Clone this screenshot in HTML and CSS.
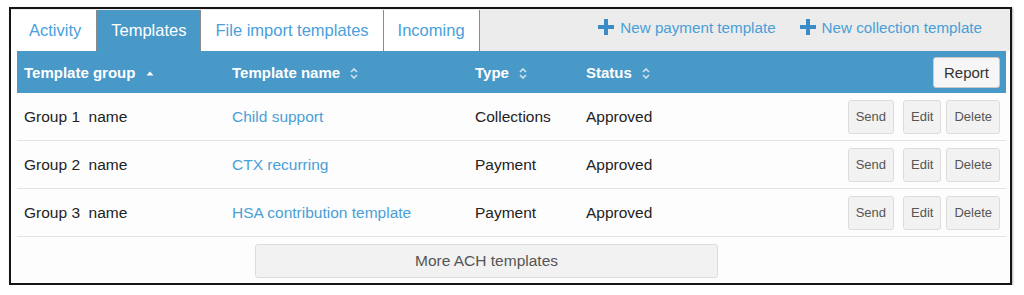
FILE: index.html
```html
<!DOCTYPE html>
<html lang="en">
<head>
  <meta charset="UTF-8" />
  <title>ACH Templates</title>
  <meta name="viewport" content="width=device-width, initial-scale=1" />
  <link rel="stylesheet" href="styles.css">
</head>
<body>

  <div class="frame">

    <!-- Tabs and actions -->
    <div class="tabbar">
      <a class="tab" href="#">Activity</a>
      <a class="tab active" href="#">Templates</a>
      <a class="tab" href="#">File import templates</a>
      <a class="tab" href="#">Incoming</a>

      <div class="actions">
        <a href="#" class="new-link">
          <svg class="plus" width="16" height="16" viewBox="0 0 16 16"><path d="M8 0v16M0 8h16" stroke="currentColor" stroke-width="4"/></svg>
          New payment template
        </a>
        <a href="#" class="new-link">
          <svg class="plus" width="16" height="16" viewBox="0 0 16 16"><path d="M8 0v16M0 8h16" stroke="currentColor" stroke-width="4"/></svg>
          New collection template
        </a>
      </div>
    </div>

    <div class="panel">
      <table class="templates">
        <colgroup>
          <col style="width: 208px">
          <col style="width: 243px">
          <col style="width: 111px">
          <col>
          <col style="width: 190px">
        </colgroup>
        <thead>
          <tr>
            <th>Template group
              <svg class="sort" width="8" height="10" viewBox="0 0 8 10"><path d="M0.5 6.5L4 2.5L7.5 6.5Z" fill="#fff"/></svg>
            </th>
            <th>Template name
              <svg class="sort dim" width="8" height="11" viewBox="0 0 8 11"><path d="M1 4L4 1L7 4M1 7L4 10L7 7" fill="none" stroke="#fff" stroke-width="1.6"/></svg>
            </th>
            <th>Type
              <svg class="sort dim" width="8" height="11" viewBox="0 0 8 11"><path d="M1 4L4 1L7 4M1 7L4 10L7 7" fill="none" stroke="#fff" stroke-width="1.6"/></svg>
            </th>
            <th>Status
              <svg class="sort dim" width="8" height="11" viewBox="0 0 8 11"><path d="M1 4L4 1L7 4M1 7L4 10L7 7" fill="none" stroke="#fff" stroke-width="1.6"/></svg>
            </th>
            <th class="right"><button class="btn report">Report</button></th>
          </tr>
        </thead>
        <tbody>
          <tr>
            <td>Group 1&nbsp; name</td>
            <td><a href="#">Child support</a></td>
            <td>Collections</td>
            <td>Approved</td>
            <td class="right"><button class="btn small send">Send</button><button class="btn small">Edit</button><button class="btn small">Delete</button></td>
          </tr>
          <tr>
            <td>Group 2&nbsp; name</td>
            <td><a href="#">CTX recurring</a></td>
            <td>Payment</td>
            <td>Approved</td>
            <td class="right"><button class="btn small send">Send</button><button class="btn small">Edit</button><button class="btn small">Delete</button></td>
          </tr>
          <tr>
            <td>Group 3&nbsp; name</td>
            <td><a href="#">HSA contribution template</a></td>
            <td>Payment</td>
            <td>Approved</td>
            <td class="right"><button class="btn small send">Send</button><button class="btn small">Edit</button><button class="btn small">Delete</button></td>
          </tr>
        </tbody>
      </table>

      <button class="btn more">More ACH templates</button>
    </div>

  </div>

</body>
</html>
```

FILE: styles.css
```css
body {
  margin: 0;
  padding: 7px 0 0 9px;
  font-family: 'Liberation Sans', Arial, sans-serif;
  background: #fff;
  color: #222;
}

a {
  text-decoration: none;
}

.frame {
  width: 1003px;
  height: 278px;
  box-sizing: border-box;
  border: 2px solid #151515;
  background: #fdfdfd;
  box-shadow: 1px 1px 2px rgba(0, 0, 0, 0.3);
}

/* Tabs row */
.tabbar {
  display: flex;
  height: 42px;
  background: #ececec;
}

.tab {
  align-self: flex-end;
  height: 41px;
  box-sizing: border-box;
  display: flex;
  align-items: center;
  padding: 0 14px;
  font-size: 16.5px;
  color: #4a9fdc;
  background: #fff;
  border-right: 1px solid #8a8a8a;
}

.tab:first-child {
  padding-left: 18px;
  padding-right: 15px;
}

.tab.active {
  background: #4898c8;
  color: #fff;
}

.actions {
  margin-left: auto;
  display: flex;
  gap: 24px;
  padding: 8px 28px 0 0;
  height: 20px;
}

.new-link {
  display: flex;
  align-items: center;
  gap: 6px;
  font-size: 15.2px;
  color: #4a9fd6;
}

.plus {
  color: #3a8bc6;
}

/* Table */
.panel {
  padding: 0 4px 6px 6px;
}

.templates {
  width: 989px;
  table-layout: fixed;
  border-collapse: collapse;
  font-size: 15.5px;
}

.templates th {
  height: 42px;
  background: #4898c8;
  color: #fff;
  text-align: left;
  font-size: 15px;
  font-weight: bold;
  padding: 0 7px;
  white-space: nowrap;
}

.templates td {
  height: 47px;
  padding: 0 7px;
  border-bottom: 1px solid #e3e3e3;
  white-space: nowrap;
}

.templates td a {
  color: #4a9fd6;
}

.templates .right {
  text-align: right;
  padding-right: 6px;
}

.sort {
  margin-left: 6px;
  vertical-align: -1px;
}

.sort.dim {
  opacity: 0.75;
}

/* Buttons */
.btn {
  font-family: inherit;
  border: 1px solid #dcdcdc;
  border-radius: 3px;
  background: #f2f2f2;
  color: #555;
  cursor: pointer;
}

.btn.report {
  height: 31px;
  padding: 0 10px;
  font-size: 15px;
  color: #333;
  background: #f6f6f6;
  border-color: #c9c9c9;
}

.btn.small {
  height: 34px;
  padding: 0 7px;
  font-size: 13px;
  margin-left: 5px;
}

.btn.small.send {
  margin-left: 0;
  margin-right: 4px;
}

.btn.more {
  display: block;
  margin: 7px 0 0 238px;
  width: 463px;
  height: 34px;
  font-size: 15.5px;
}
```
